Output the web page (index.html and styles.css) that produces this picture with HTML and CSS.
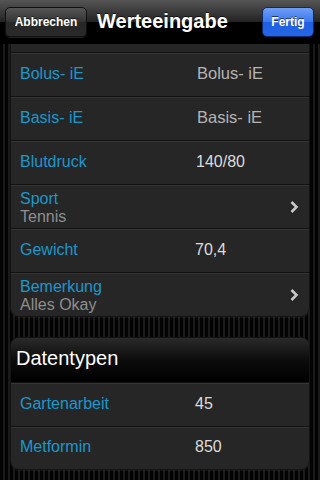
FILE: index.html
```html
<!DOCTYPE html>
<html>
<head>
<meta charset="utf-8">
<link rel="stylesheet" href="styles.css">
</head>
<body>
<div class="screen">
  <header class="navbar">
    <button class="btn btn-cancel">Abbrechen</button>
    <h1 class="title">Werteeingabe</h1>
    <button class="btn btn-done">Fertig</button>
  </header>
  <main class="content">
    <div class="inner">
      <section class="card card-first">
        <div class="row row-cut"></div>
        <div class="row"><span class="label">Bolus- iE</span><span class="value placeholder">Bolus- iE</span></div>
        <div class="row"><span class="label">Basis- iE</span><span class="value placeholder">Basis- iE</span></div>
        <div class="row"><span class="label">Blutdruck</span><span class="value">140/80</span></div>
        <div class="row row-sub">
          <div class="stack"><span class="label">Sport</span><span class="sub">Tennis</span></div>
          <svg class="chev" width="10" height="14" viewBox="0 0 10 14"><path d="M2.5 2 L7.5 7 L2.5 12" fill="none" stroke="#c8c8c8" stroke-width="2.6"/></svg>
        </div>
        <div class="row"><span class="label">Gewicht</span><span class="value v2">70,4</span></div>
        <div class="row row-sub">
          <div class="stack"><span class="label">Bemerkung</span><span class="sub">Alles Okay</span></div>
          <svg class="chev" width="10" height="14" viewBox="0 0 10 14"><path d="M2.5 2 L7.5 7 L2.5 12" fill="none" stroke="#c8c8c8" stroke-width="2.6"/></svg>
        </div>
      </section>
      <section class="card card-second">
        <div class="card-header">Datentypen</div>
        <div class="row"><span class="label">Gartenarbeit</span><span class="value v2">45</span></div>
        <div class="row"><span class="label">Metformin</span><span class="value v2">850</span></div>
      </section>
    </div>
  </main>
</div>
</body>
</html>
```
FILE: styles.css
```css
* { box-sizing: border-box; }
html, body { margin: 0; padding: 0; }
body {
  width: 320px;
  height: 480px;
  overflow: hidden;
  font-family: "Liberation Sans", Arial, sans-serif;
  background: #000;
}
.screen {
  width: 320px;
  height: 480px;
  display: flex;
  flex-direction: column;
  background: repeating-linear-gradient(90deg, #030303 0 3px, #1a1a1a 3px 5px);
}
.navbar {
  height: 44px;
  flex: none;
  display: flex;
  align-items: center;
  padding: 0 6px 0 5px;
  background: linear-gradient(#555 0, #242424 50%, #000 51%, #000 100%);
  border-bottom: 1px solid #000;
  position: relative;
  z-index: 2;
}
.btn {
  height: 30px;
  border-radius: 5px;
  font-family: "Liberation Sans", Arial, sans-serif;
  font-weight: bold;
  font-size: 12px;
  color: #fff;
  padding: 0 8px;
  text-shadow: 0 -1px 0 rgba(0,0,0,0.6);
}
.btn-cancel {
  width: 82px;
  border: 1px solid #111;
  background: linear-gradient(#555 0, #333 50%, #262626 51%, #2a2a2a 100%);
  box-shadow: 0 1px 0 rgba(255,255,255,0.12);
}
.title {
  margin: 0 0 0 10px;
  font-size: 20px;
  font-weight: bold;
  color: #fff;
  flex: 1;
  text-shadow: 0 -1px 0 rgba(0,0,0,0.6);
}
.btn-done {
  width: 52px;
  border: 1px solid #0d2a66;
  background: linear-gradient(#6f9ef5 0, #3a78ee 50%, #1f5fe3 51%, #2466e6 100%);
}
.content {
  flex: 1;
  overflow: hidden;
}
.inner {
  margin-top: -37px;
  padding: 0 10px;
  display: flex;
  flex-direction: column;
  gap: 20px;
}
.card {
  background: #262626;
  border-radius: 9px;
  border: 1px solid #141414;
  overflow: hidden;
  box-shadow: 0 1px 0 rgba(255,255,255,0.06);
}
.row {
  height: 44px;
  display: flex;
  align-items: center;
  padding: 0 0 2px 9px;
  border-top: 1px solid #121212;
  box-shadow: inset 0 1px 0 #353535;
  position: relative;
}
.row-cut { border-top: none; box-shadow: none; }
.label {
  color: #1c97cc;
  font-size: 16px;
  width: 176px;
  flex: none;
}
.value {
  color: #dcdcdc;
  font-size: 16px;
}
.value.placeholder { color: #b4b4b4; font-size: 16.5px; margin-left: 1px; }
.value.v2 { margin-left: -1px; }
.row-sub { justify-content: space-between; padding: 0 10px 0 9px; }
.stack {
  display: flex;
  flex-direction: column;
  line-height: 18px;
  padding-top: 2px;
}
.sub {
  color: #8e8e8e;
  font-size: 16px;
}
.chev { display: block; }
.card-second .row:last-child { height: 43px; }
.card-header {
  height: 44px;
  display: flex;
  align-items: center;
  padding: 0 0 3px 5px;
  font-size: 20px;
  color: #fff;
  background: linear-gradient(#2a2a2a 0, #0c0c0c 50%, #000 100%);
}
```
